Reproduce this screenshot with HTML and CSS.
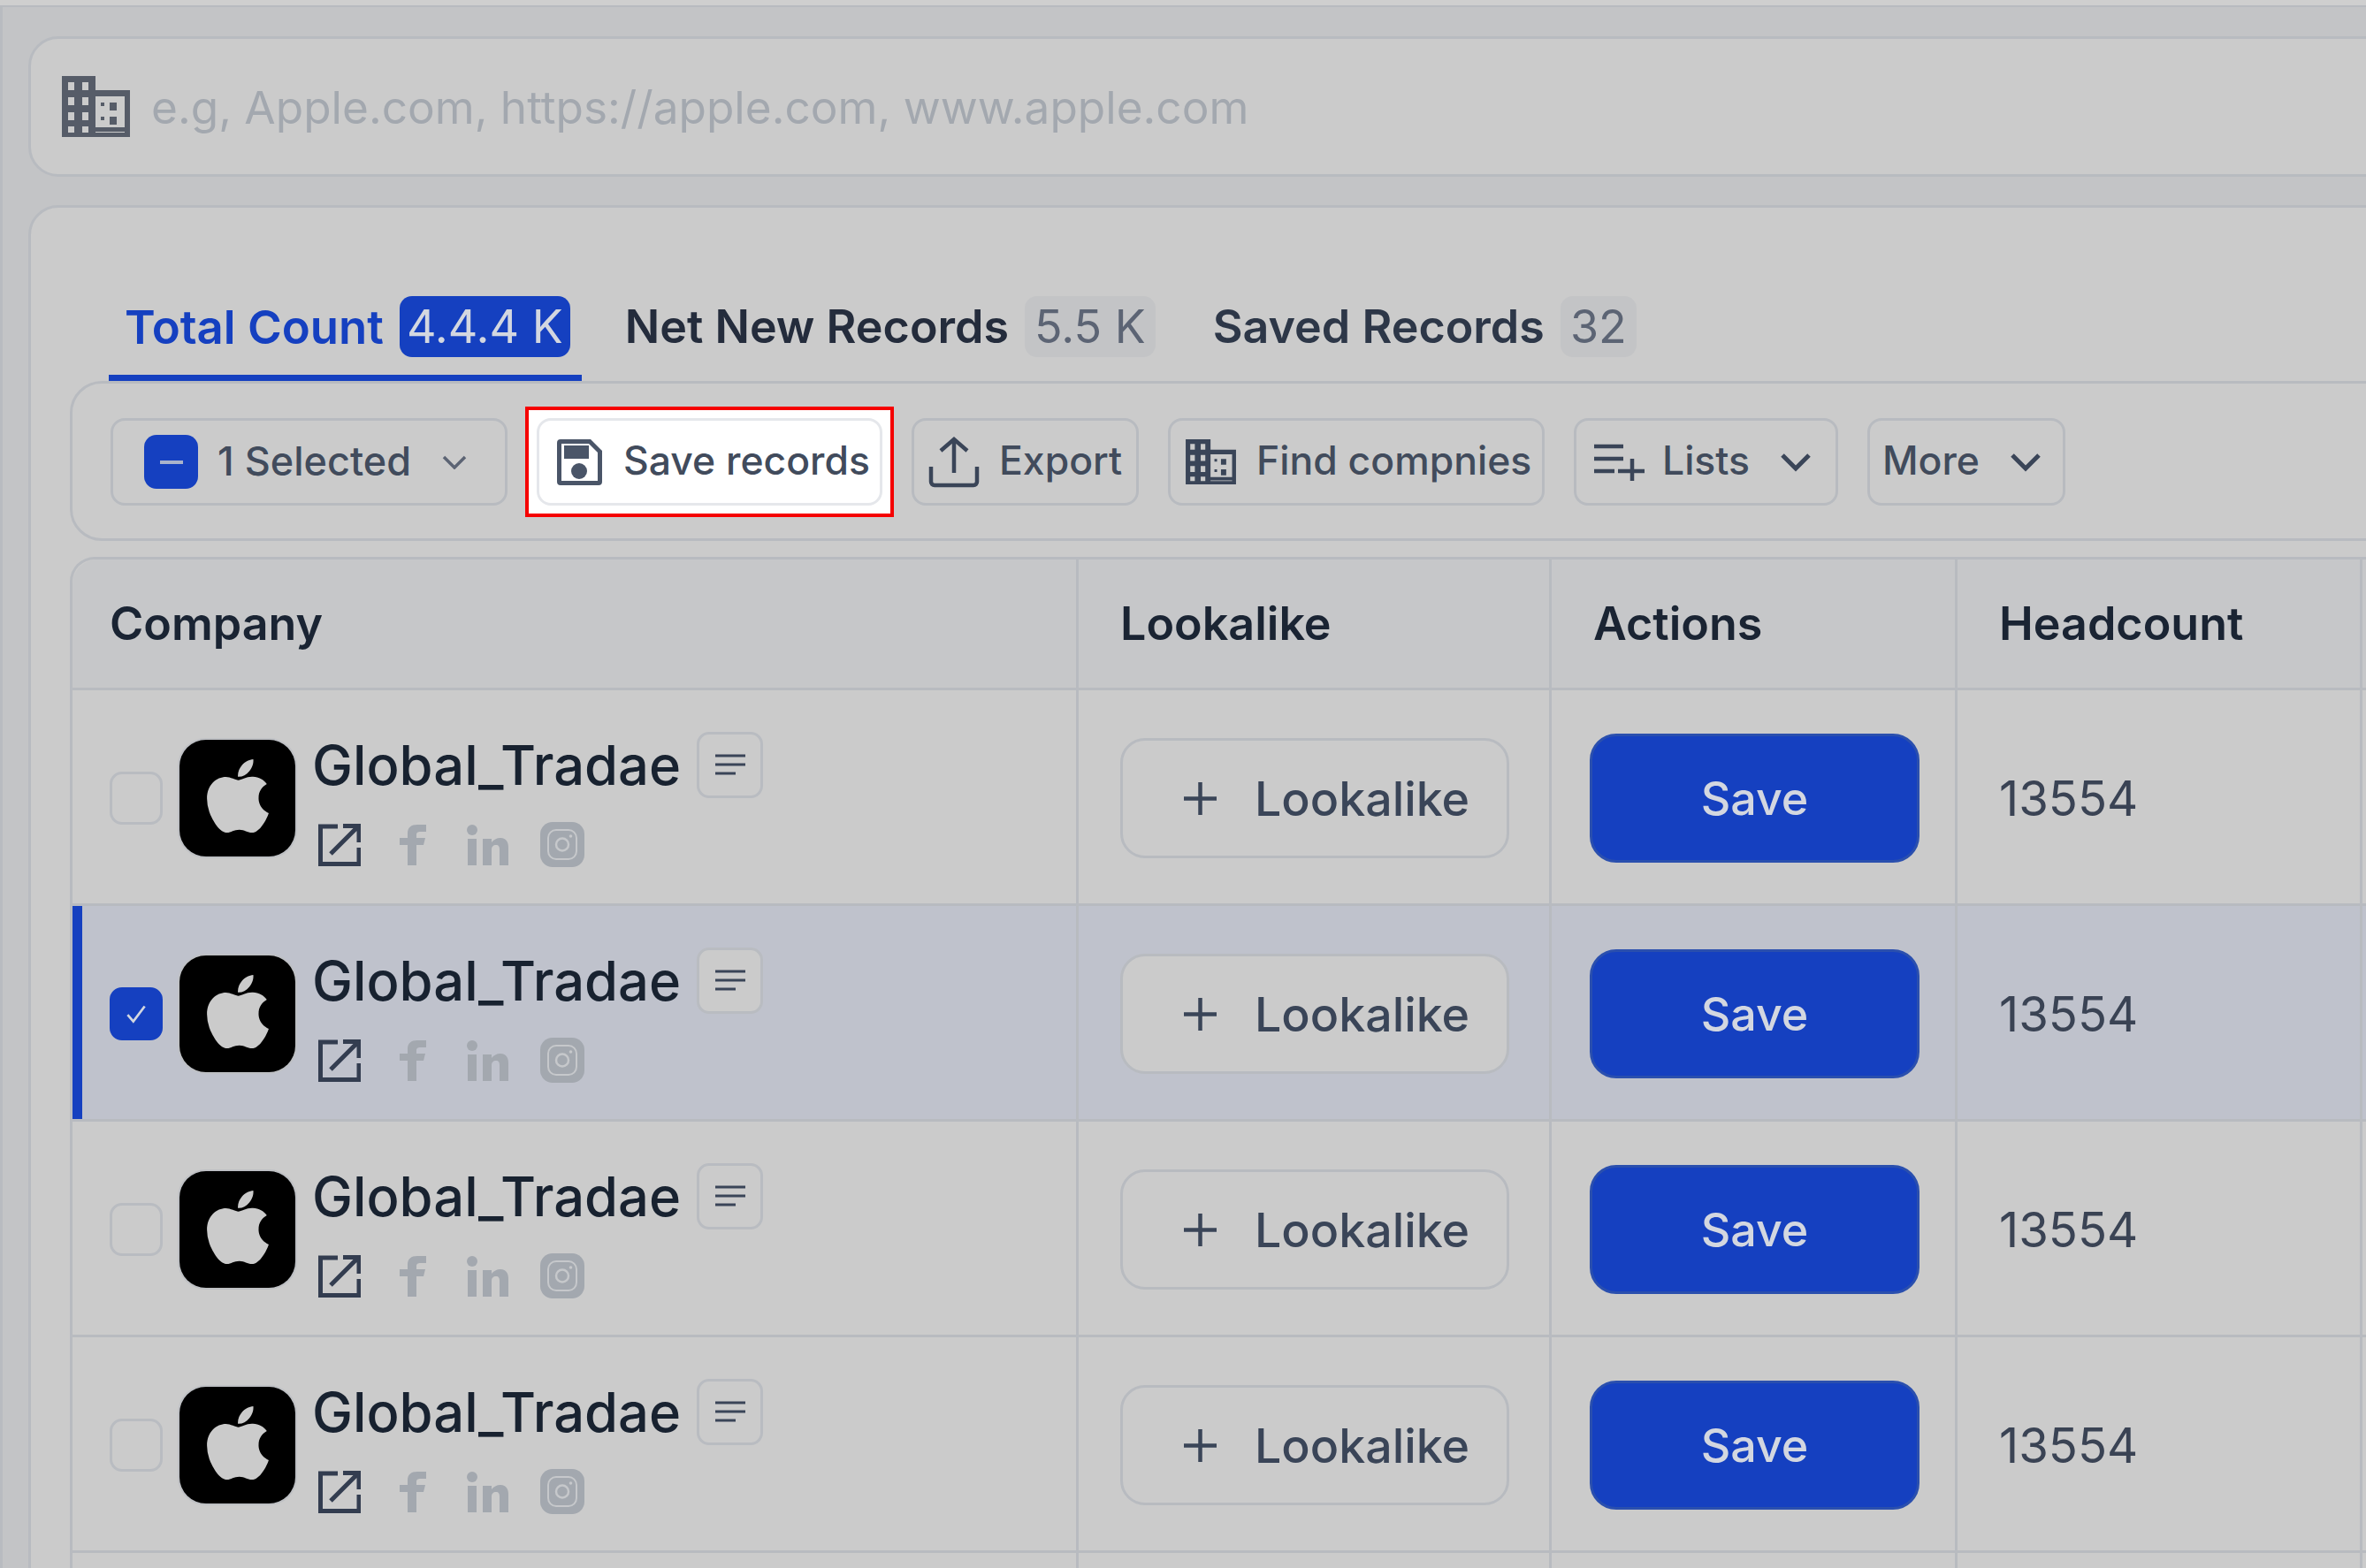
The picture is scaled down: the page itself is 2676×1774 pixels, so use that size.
FILE: index.html
```html
<!DOCTYPE html>
<html lang="en">
<head>
    <meta charset="UTF-8">
    <title>Company search</title>
    <link rel="stylesheet" href="styles.css">
</head>
<body>

<svg class="sprites" width="0" height="0">
    <symbol id="i-building" viewBox="0 0 77 69">
        <path fill="currentColor" fill-rule="evenodd" d="M0 0h38v16h39v53H0zM7 7v9h7V7zm16 0v9h7V7zM7 24v9h7v-9zm16 0v9h7v-9zM7 41v9h7v-9zm16 0v9h7v-9zM7 57v7h7v-7zm16 0v7h7v-7zM38 23v35h33V23zm0 41v0h33v-1H38z"/>
        <path fill="currentColor" d="M54 30h8v9h-8zM54 46h8v9h-8zM44 30h4v4h-4zM44 46h4v4h-4z"/>
    </symbol>
    <symbol id="i-apple" viewBox="0 0 384 512">
        <path fill="currentColor" d="M318.7 268.7c-.2-36.7 16.4-64.4 50-84.8-18.8-26.9-47.2-41.7-84.7-44.6-35.5-2.8-74.3 20.7-88.5 20.7-15 0-49.4-19.7-76.4-19.7C63.3 141.2 4 184.8 4 273.5q0 39.3 14.4 81.2c12.8 36.7 59 126.7 107.2 125.2 25.2-.6 43-17.9 75.8-17.9 31.8 0 48.3 17.9 76.4 17.9 48.6-.7 90.4-82.5 102.6-119.3-65.2-30.7-61.7-90-61.7-91.9zm-56.6-164.2c27.3-32.4 24.8-61.9 24-72.5-24.1 1.4-52 16.4-67.9 34.9-17.5 19.8-27.8 44.3-25.6 71.9 26.1 2 49.9-11.4 69.5-34.3z"/>
    </symbol>
    <symbol id="i-note" viewBox="0 0 34 24">
        <path fill="none" stroke="currentColor" stroke-width="3" d="M0 2h34M0 12h34M0 22h23"/>
    </symbol>
    <symbol id="i-plus" viewBox="0 0 37 37">
        <path fill="none" stroke="currentColor" stroke-width="4.500" d="M18.500 0v37M0 18.500h37"/>
    </symbol>
    <symbol id="i-open" viewBox="0 0 48 48">
        <path fill="none" stroke="currentColor" stroke-width="5" d="M22 3H2.500v42.500H46V27"/>
        <path fill="none" stroke="currentColor" stroke-width="5" d="M14 34 44 4M28 2.500h18V21"/>
    </symbol>
    <symbol id="i-facebook" viewBox="0 0 30 46">
        <path fill="currentColor" d="M9 46V23H0v-8h9V10C9 3 13 0 20 0h10v8h-6c-4 0-5 1-5 4v3h10l-2 8h-8v23z"/>
    </symbol>
    <symbol id="i-linkedin" viewBox="0 0 47 46">
        <circle cx="6" cy="6" r="6" fill="currentColor"/>
        <path fill="currentColor" d="M1 16h10v30H1zM18 16h10v4c2-3 6-5 10-5 6 0 9 4 9 11v20H37V28c0-3-1-5-4-5s-5 2-5 5v18H18z"/>
    </symbol>
    <symbol id="i-instagram" viewBox="0 0 50 51">
        <rect width="50" height="51" rx="14" fill="currentColor"/>
        <rect x="9" y="9" width="32" height="33" rx="9" fill="none" stroke="#c6c8cb" stroke-width="2"/>
        <circle cx="25" cy="25.500" r="7" fill="none" stroke="#c6c8cb" stroke-width="2.500"/>
        <circle cx="34.500" cy="16" r="1.800" fill="#c6c8cb"/>
    </symbol>
</svg>

<div class="frame">
    <div class="search-card">
        <svg class="search-icon"><use href="#i-building"/></svg>
        <span class="search-hint">e.g, Apple.com, https://apple.com, www.apple.com</span>
    </div>

    <div class="results-card">
        <div class="tabs">
            <div class="tab tab-active">Total Count <span class="count">4.4.4 K</span></div>
            <div class="tab tab-net">Net New Records <span class="count">5.5 K</span></div>
            <div class="tab tab-saved">Saved Records <span class="count">32</span></div>
        </div>

        <div class="toolbar">
            <button class="tool tool-select">
                <span class="minus-box"><span class="minus"></span></span>
                1 Selected
                <svg class="caret caret-thin" viewBox="0 0 28 16"><path d="M2 2l12 12L26 2"/></svg>
            </button>
            <div class="highlight">
                <button class="tool tool-save">
                    <svg class="save-icon" viewBox="0 0 51 52">
                        <path fill="#4a5568" fill-rule="evenodd" d="M4 0h34l13 13v35a4 4 0 0 1-4 4H4a4 4 0 0 1-4-4V4a4 4 0 0 1 4-4zm1 5v42h41V15L36 5z"/>
                        <path fill="#4a5568" d="M8 7h28v15H8z"/>
                        <circle cx="25" cy="36" r="9" fill="#4a5568"/>
                    </svg>
                    Save records
                </button>
            </div>
            <button class="tool tool-export">
                <svg class="export-icon" viewBox="0 0 58 58">
                    <path fill="none" stroke="#3a4558" stroke-width="4.500" d="M29 3v38M14 16 29 3l15 13M3 34v17a4 4 0 0 0 4 4h44a4 4 0 0 0 4-4V34"/>
                </svg>
                Export
            </button>
            <button class="tool tool-find">
                <svg class="find-icon"><use href="#i-building"/></svg>
                Find compnies
            </button>
            <button class="tool tool-lists">
                <svg class="lists-icon" viewBox="0 0 57 42">
                    <path fill="none" stroke="#3a4558" stroke-width="4.500" d="M0 3h33M0 17h33M0 31h23M27 31h30M43 17v25"/>
                </svg>
                Lists
                <svg class="caret" viewBox="0 0 36 22"><path d="M3 3l15 15L33 3"/></svg>
            </button>
            <button class="tool tool-more">
                More
                <svg class="caret" viewBox="0 0 36 22"><path d="M3 3l15 15L33 3"/></svg>
            </button>
        </div>

        <table class="companies">
            <colgroup>
                <col class="col-company">
                <col class="col-lookalike">
                <col class="col-actions">
                <col class="col-headcount">
                <col class="col-rest">
            </colgroup>
            <thead>
                <tr>
                    <th>Company</th>
                    <th>Lookalike</th>
                    <th>Actions</th>
                    <th>Headcount</th>
                    <th></th>
                </tr>
            </thead>
            <tbody>
                <tr>
                    <td>
                        <div class="company">
                            <span class="check"></span>
                            <span class="logo"><svg><use href="#i-apple"/></svg></span>
                            <div class="company-info">
                                <div class="name-row"><span class="name">Global_Tradae</span><span class="note"><svg><use href="#i-note"/></svg></span></div>
                                <div class="links">
                                    <svg class="link-open"><use href="#i-open"/></svg>
                                    <svg class="link-fb"><use href="#i-facebook"/></svg>
                                    <svg class="link-in"><use href="#i-linkedin"/></svg>
                                    <svg class="link-ig"><use href="#i-instagram"/></svg>
                                </div>
                            </div>
                        </div>
                    </td>
                    <td><button class="lookalike"><svg class="plus"><use href="#i-plus"/></svg>Lookalike</button></td>
                    <td><button class="save">Save</button></td>
                    <td class="num">13554</td>
                    <td></td>
                </tr>
                <tr class="selected">
                    <td>
                        <div class="company">
                            <span class="check check-on"><svg viewBox="0 0 28 28"><path d="M5 15l6 7L23 6"/></svg></span>
                            <span class="logo"><svg><use href="#i-apple"/></svg></span>
                            <div class="company-info">
                                <div class="name-row"><span class="name">Global_Tradae</span><span class="note"><svg><use href="#i-note"/></svg></span></div>
                                <div class="links">
                                    <svg class="link-open"><use href="#i-open"/></svg>
                                    <svg class="link-fb"><use href="#i-facebook"/></svg>
                                    <svg class="link-in"><use href="#i-linkedin"/></svg>
                                    <svg class="link-ig"><use href="#i-instagram"/></svg>
                                </div>
                            </div>
                        </div>
                    </td>
                    <td><button class="lookalike"><svg class="plus"><use href="#i-plus"/></svg>Lookalike</button></td>
                    <td><button class="save">Save</button></td>
                    <td class="num">13554</td>
                    <td></td>
                </tr>
                <tr>
                    <td>
                        <div class="company">
                            <span class="check"></span>
                            <span class="logo"><svg><use href="#i-apple"/></svg></span>
                            <div class="company-info">
                                <div class="name-row"><span class="name">Global_Tradae</span><span class="note"><svg><use href="#i-note"/></svg></span></div>
                                <div class="links">
                                    <svg class="link-open"><use href="#i-open"/></svg>
                                    <svg class="link-fb"><use href="#i-facebook"/></svg>
                                    <svg class="link-in"><use href="#i-linkedin"/></svg>
                                    <svg class="link-ig"><use href="#i-instagram"/></svg>
                                </div>
                            </div>
                        </div>
                    </td>
                    <td><button class="lookalike"><svg class="plus"><use href="#i-plus"/></svg>Lookalike</button></td>
                    <td><button class="save">Save</button></td>
                    <td class="num">13554</td>
                    <td></td>
                </tr>
                <tr>
                    <td>
                        <div class="company">
                            <span class="check"></span>
                            <span class="logo"><svg><use href="#i-apple"/></svg></span>
                            <div class="company-info">
                                <div class="name-row"><span class="name">Global_Tradae</span><span class="note"><svg><use href="#i-note"/></svg></span></div>
                                <div class="links">
                                    <svg class="link-open"><use href="#i-open"/></svg>
                                    <svg class="link-fb"><use href="#i-facebook"/></svg>
                                    <svg class="link-in"><use href="#i-linkedin"/></svg>
                                    <svg class="link-ig"><use href="#i-instagram"/></svg>
                                </div>
                            </div>
                        </div>
                    </td>
                    <td><button class="lookalike"><svg class="plus"><use href="#i-plus"/></svg>Lookalike</button></td>
                    <td><button class="save">Save</button></td>
                    <td class="num">13554</td>
                    <td></td>
                </tr>
                <tr>
                    <td></td>
                    <td></td>
                    <td></td>
                    <td></td>
                    <td></td>
                </tr>
            </tbody>
        </table>
    </div>
</div>

</body>
</html>
```

FILE: styles.css
```css
html, body {
    margin: 0;
    height: 1774px;
    overflow: hidden;
}
body {
    background-color: #cfcfcf;
    padding-top: 6px;
    box-sizing: border-box;
    font-family: Inter, "Liberation Sans", sans-serif;
    color: #1a2433;
}
.sprites {
    display: block;
    height: 0;
}
button {
    font-family: inherit;
    cursor: pointer;
}
.frame {
    height: 1768px;
    box-sizing: border-box;
    overflow: hidden;
    background-color: #c3c4c6;
    border-top: 2px solid #b8bbc0;
    border-left: 3px solid #b8bbc0;
    padding: 33px 0 0 29px;
}

/* search box */
.search-card {
    display: flex;
    align-items: center;
    gap: 24px;
    height: 159px;
    box-sizing: border-box;
    margin-right: -60px;
    padding-left: 35px;
    background-color: #cbcbcb;
    border: 3px solid #b8bbc0;
    border-radius: 34px;
}
.search-icon {
    width: 77px;
    height: 69px;
    color: #565c68;
}
.search-hint {
    font-size: 51.3px;
    color: #a3a8af;
}

/* results */
.results-card {
    margin-top: 32px;
    margin-right: -60px;
    height: 1600px;
    box-sizing: border-box;
    padding: 80px 0 0 44px;
    background-color: #cbcbcb;
    border: 3px solid #b8bbc0;
    border-radius: 34px;
}
.tabs {
    display: flex;
    margin-left: 44px;
}
.tab {
    display: flex;
    align-items: center;
    gap: 18px;
    height: 116px;
    box-sizing: border-box;
    padding: 0 13px 0 18px;
    border-bottom: 7px solid transparent;
    font-size: 52px;
    font-weight: 600;
    color: #242c3c;
    white-space: nowrap;
}
.tab-active {
    font-size: 52.7px;
    color: #1540c0;
    border-bottom-color: #1540c0;
}
.tab-net {
    margin-left: 31px;
}
.tab-saved {
    margin-left: 34px;
    color: #2d3748;
}
.count {
    display: flex;
    align-items: center;
    height: 69px;
    padding: 0 11px;
    border-radius: 14px;
    background-color: #c3c4c6;
    color: #5c6474;
    font-size: 52px;
    font-weight: 400;
}
.tab-active .count {
    padding: 0 8px;
    background-color: #1540c0;
    color: #d3d7e0;
}

.toolbar {
    display: flex;
    align-items: flex-start;
    gap: 33px;
    height: 181px;
    box-sizing: border-box;
    padding: 39px 0 0 43px;
    border: 3px solid #b8bbc0;
    border-radius: 36px;
}
.tool {
    display: flex;
    align-items: center;
    height: 99px;
    box-sizing: border-box;
    padding: 0 0 3px;
    background: none;
    border: 3px solid #b8bbc0;
    border-radius: 16px;
    font-size: 44.5px;
    font-weight: 500;
    color: #414b5c;
    white-space: nowrap;
}
.tool svg {
    margin-top: 3px;
}
.caret {
    width: 36px;
    height: 22px;
    fill: none;
    stroke: #3a4558;
    stroke-width: 5;
}
.caret-thin {
    width: 28px;
    height: 16px;
    margin-left: 13px;
    stroke: #5c6474;
    stroke-width: 3.5;
}
.tool-select {
    width: 449px;
    padding-left: 35px;
    gap: 22px;
    font-size: 45px;
}
.minus-box {
    display: flex;
    align-items: center;
    justify-content: center;
    width: 61px;
    height: 61px;
    margin-top: 3px;
    border-radius: 14px;
    background-color: #1540c0;
}
.minus {
    width: 26px;
    height: 4px;
    background-color: #a9b3cb;
}
/* red marker drawn round the Save records button */
.highlight {
    margin: -13px;
    padding: 9px;
    background-color: #fff;
    border: 4px solid #f50000;
}
.tool-save {
    width: 391px;
    padding-left: 20px;
    gap: 24px;
    background-color: #fff;
    border-color: #e5e7eb;
    color: #414b5c;
}
.save-icon {
    width: 51px;
    height: 52px;
}
.tool-export {
    width: 257px;
    padding-left: 16px;
    gap: 22px;
}
.export-icon {
    width: 58px;
    height: 58px;
}
.tool-find {
    width: 426px;
    padding-left: 17px;
    gap: 23px;
}
.find-icon {
    width: 57px;
    height: 51px;
    color: #3a4558;
}
.tool-lists {
    width: 299px;
    padding-left: 20px;
    gap: 20px;
}
.lists-icon {
    width: 57px;
    height: 42px;
}
.tool-lists .caret {
    margin-left: 14px;
}
.tool-more {
    width: 224px;
    padding-left: 14px;
    gap: 34px;
}

/* table */
.companies {
    table-layout: fixed;
    width: 2900px;
    margin-top: 18px;
    border-collapse: separate;
    border-spacing: 0;
    border-top: 3px solid #b8bbc0;
    border-left: 3px solid #b8bbc0;
    border-top-left-radius: 28px;
}
.col-company { width: 1138px; }
.col-lookalike { width: 535px; }
.col-actions { width: 459px; }
.col-headcount { width: 458px; }
.companies th,
.companies td {
    padding: 0 0 0 47px;
    border-right: 3px solid #b8bbc0;
    border-bottom: 3px solid #b8bbc0;
    text-align: left;
}
.companies th {
    height: 148px;
    box-sizing: border-box;
    background-color: #c6c7c9;
    font-size: 52px;
    font-weight: 600;
    color: #1a2433;
}
.companies th:first-child {
    padding-left: 42px;
    border-top-left-radius: 28px;
}
.companies td {
    height: 244px;
    box-sizing: border-box;
    padding-top: 3px;
}
.companies td:first-child {
    padding-left: 42px;
}
.selected td {
    background-color: #bfc2cc;
}
.selected td:first-child {
    box-shadow: inset 11px 0 0 #1540c0;
}
.company {
    display: flex;
    align-items: center;
}
.check {
    display: flex;
    align-items: center;
    justify-content: center;
    width: 60px;
    height: 60px;
    box-sizing: border-box;
    border: 3px solid #b9bcc1;
    border-radius: 14px;
}
.check-on {
    background-color: #1540c0;
    border-color: #1540c0;
}
.check-on svg {
    width: 30px;
    height: 30px;
    fill: none;
    stroke: #d3d7e0;
    stroke-width: 2.5;
}
.logo {
    display: flex;
    align-items: center;
    justify-content: center;
    width: 131px;
    height: 132px;
    margin-left: 19px;
    border-radius: 30px;
    background-color: #000;
    box-shadow: 0 0 0 2px #bec0c4;
    color: #cbcbcb;
}
.logo svg {
    width: 72px;
    height: 95px;
    margin-top: -5px;
}
.company-info {
    display: flex;
    flex-direction: column;
    margin-left: 19px;
}
.name-row {
    display: flex;
    align-items: center;
    gap: 18px;
    height: 76px;
    margin-top: 2px;
}
.name {
    font-size: 61.5px;
    font-weight: 500;
    color: #182230;
    white-space: nowrap;
}
.note {
    display: flex;
    align-items: center;
    justify-content: center;
    width: 75px;
    height: 75px;
    box-sizing: border-box;
    background-color: #cbcbcb;
    border: 3px solid #b9bcc1;
    border-radius: 14px;
    color: #3a4558;
}
.note svg {
    width: 34px;
    height: 24px;
}
.links {
    display: flex;
    align-items: center;
    margin: 27px 0 0 7px;
    color: #a3a8af;
}
.link-open {
    width: 48px;
    height: 48px;
    color: #333d50;
}
.link-fb {
    width: 30px;
    height: 46px;
    margin-left: 44px;
}
.link-in {
    width: 47px;
    height: 46px;
    margin-left: 46px;
}
.link-ig {
    width: 50px;
    height: 51px;
    margin-left: 36px;
}
.lookalike {
    display: flex;
    align-items: center;
    gap: 43px;
    width: 440px;
    height: 136px;
    padding: 0 0 0 69px;
    background-color: #cbcbcb;
    border: 3px solid #b8bbc0;
    border-radius: 28px;
    font-size: 53.7px;
    font-weight: 500;
    color: #3a4558;
}
.plus {
    width: 37px;
    height: 37px;
}
.save {
    display: block;
    width: 373px;
    height: 146px;
    margin-left: -4px;
    background-color: #1540c0;
    border: 3px solid #2a4fae;
    border-radius: 30px;
    font-size: 52px;
    font-weight: 500;
    color: #d3d7e0;
}
.num {
    font-size: 54.5px;
    color: #3a4354;
}
```
